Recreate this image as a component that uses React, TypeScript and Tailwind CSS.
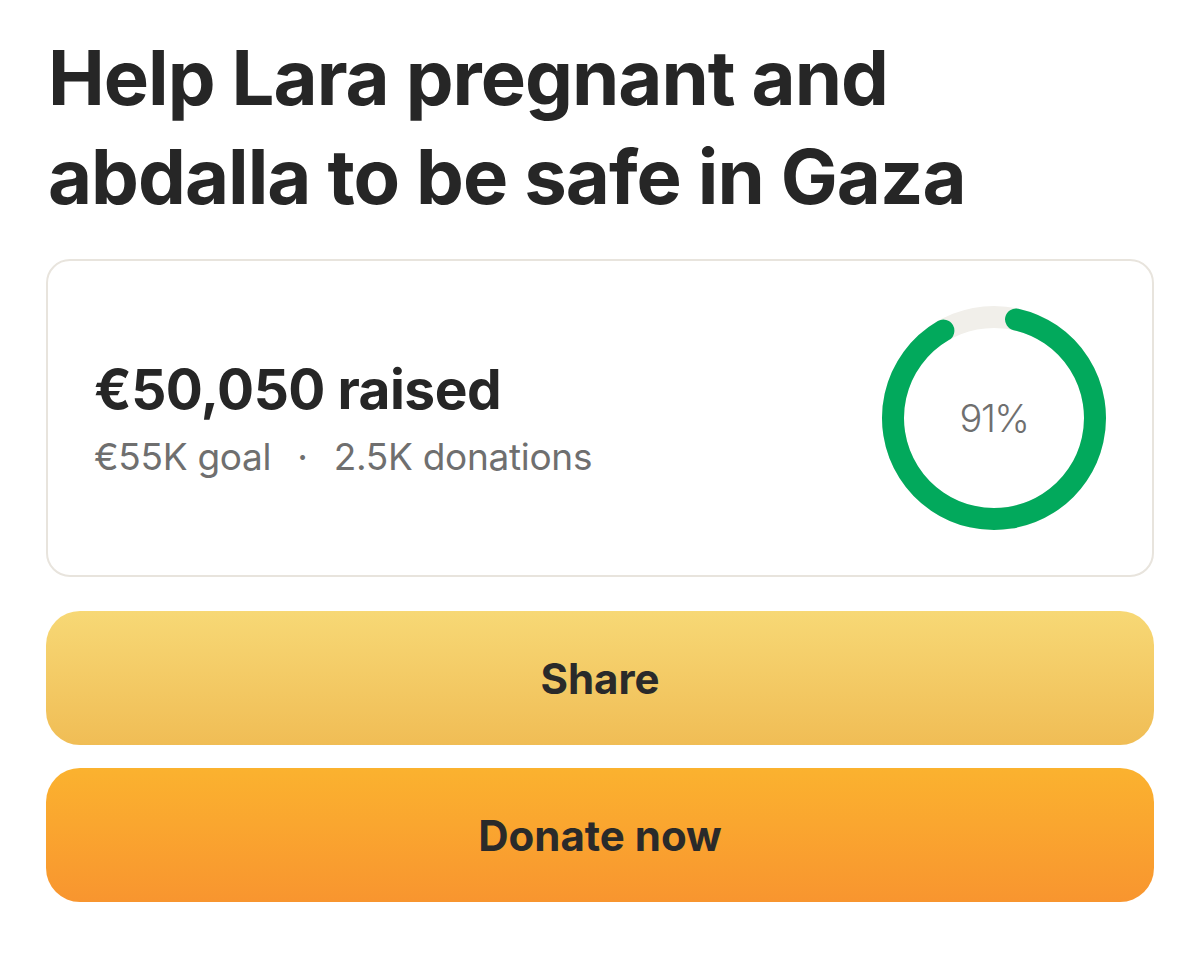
import React from "react";

function Ring() {
  const r = 101;
  const c = 2 * Math.PI * r;
  const pct = 0.91;
  const gapShift = 0.02;
  const len = c * (pct - 0.03);
  return (
    <div className="relative w-[226px] h-[226px]">
      <svg width="226" height="226" viewBox="0 0 226 226" className="absolute inset-0">
        <circle cx="113" cy="113" r={r} fill="none" stroke="#f1efea" strokeWidth="22" />
        <circle
          cx="113"
          cy="113"
          r={r}
          fill="none"
          stroke="#02a95c"
          strokeWidth="22"
          strokeLinecap="round"
          strokeDasharray={`${len} ${c}`}
          transform={`rotate(${-90 + (gapShift + 0.015) * 360} 113 113)`}
        />
      </svg>
      <div className="absolute inset-0 flex items-center justify-center text-[38px] font-light text-[#6f6f6f] tracking-[-1.5px]">
        91%
      </div>
    </div>
  );
}

export default function App() {
  return (
    <div
      className="min-h-[975px] bg-white px-[46px] pt-[28px] text-[#262626]"
      style={{ fontFamily: "Inter, 'Noto Sans', sans-serif" }}
    >
      <h1 className="text-[76px] font-bold leading-[99px] tracking-[-1px] pl-[2px]">
        Help Lara pregnant and
        <br />
        abdalla to be safe in Gaza
      </h1>
      <div className="mt-[33px] h-[318px] rounded-[24px] border-2 border-[#e8e4dd] flex items-center justify-between pl-[46px] pr-[45px]">
        <div className="flex flex-col mt-[2px]">
          <div className="text-[55px] font-bold leading-[64px] tracking-[-0.5px]">€50,050 raised</div>
          <div className="mt-[12px] text-[37px] leading-[48px] text-[#6f6f6f] tracking-[-0.3px]">
            €55K goal <span className="mx-[16px]">·</span> 2.5K donations
          </div>
        </div>
        <Ring />
      </div>
      <button className="mt-[34px] w-full h-[134px] rounded-[34px] bg-gradient-to-b from-[#f7d875] to-[#f0bd55] text-[42px] font-bold text-[#2a2a2a]">
        Share
      </button>
      <button className="mt-[23px] w-full h-[134px] rounded-[34px] bg-gradient-to-b from-[#fbb22f] to-[#f8952f] text-[42px] font-bold text-[#2a2a2a]">
        Donate now
      </button>
    </div>
  );
}
